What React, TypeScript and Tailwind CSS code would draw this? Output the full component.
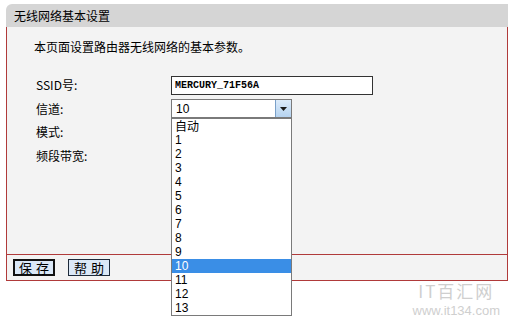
import React from "react";

const items = ["自动", "1", "2", "3", "4", "5", "6", "7", "8", "9", "10", "11", "12", "13"];

export default function App() {
  const cjk = { fontFamily: '"Noto Sans CJK SC", "Liberation Sans", sans-serif' };
  return (
    <div className="relative w-[514px] h-[320px] bg-white overflow-hidden text-[12px] text-black" style={cjk}>
      <div className="pt-[4px] pl-[6px] w-[508px]">
        <div className="h-[23px] bg-[#d5d5d5] rounded-tl-[6px] flex items-center pl-[8px] text-[12px] leading-none">
          无线网络基本设置
        </div>
        <div className="border-l border-r border-b border-[#b03a3a] bg-[#f3f3f3]">
          <div className="h-[228px] border-b border-[#b03a3a]">
            <div className="pt-[12px] pl-[27px] leading-[16px] text-[12px]">本页面设置路由器无线网络的基本参数。</div>
            <div className="pt-[18px] pl-[29px]">
              <div className="flex items-center h-[24px]">
                <div className="w-[135px]">SSID号:</div>
                <div className="w-[202px] h-[19px] border border-[#333] bg-white flex items-center pl-[3px] text-[10px] font-bold" style={{ fontFamily: '"Liberation Mono", monospace' }}>
                  MERCURY_71F56A
                </div>
              </div>
              <div className="flex items-center h-[23px]">
                <div className="w-[135px]">信道:</div>
                <div className="relative w-[121px] h-[19px] border border-[#7a7a7a] bg-white flex items-center">
                  <span className="pl-[4px] flex-1 text-[12px]" style={{ fontFamily: '"Liberation Sans", sans-serif' }}>10</span>
                  <span className="w-[16px] h-[17px] border-l border-[#7aa0c8] bg-gradient-to-b from-[#dcebfa] to-[#b5d3f0] flex items-center justify-center">
                    <svg width="7" height="4" viewBox="0 0 7 4"><path d="M0 0H7L3.5 4Z" fill="#1a1a1a" /></svg>
                  </span>
                  <div className="absolute left-[-1px] top-[18px] w-[121px] border border-[#7a7a7a] bg-white z-10">
                    {items.map((it) => (
                      <div
                        key={it}
                        className={`h-[14px] flex items-center pl-[3px] text-[12px] leading-[12px] ${it === "10" ? "bg-[#3a8ee6] text-white" : ""}`}
                        style={it === "自动" ? cjk : { fontFamily: '"Liberation Sans", sans-serif' }}
                      >
                        {it}
                      </div>
                    ))}
                  </div>
                </div>
              </div>
              <div className="flex items-center h-[24px]">
                <div className="w-[135px]">模式:</div>
              </div>
              <div className="flex items-center h-[24px]">
                <div className="w-[135px]">频段带宽:</div>
              </div>
            </div>
          </div>
          <div className="h-[25px] flex items-center pl-[6px] gap-[13px]">
            <button className="w-[42px] h-[17px] border-2 border-[#111] bg-[#dbe8f7] flex items-center justify-center text-[13px] leading-none tracking-[4px] pl-[4px]" style={cjk}>
              保存
            </button>
            <button className="w-[42px] h-[17px] border border-[#1d2a3a] bg-[#dbe8f7] flex items-center justify-center text-[13px] leading-none tracking-[4px] pl-[4px]" style={cjk}>
              帮助
            </button>
          </div>
        </div>
      </div>
      <div className="absolute right-[14px] bottom-[3px] flex flex-col items-center text-[#cfcfcf] gap-[5px]">
        <div className="text-[17px] leading-[17px] tracking-[2px]" style={cjk}>IT百汇网</div>
        <div className="text-[13px] leading-[13px]" style={{ fontFamily: '"Liberation Sans", sans-serif' }}>www.it134.com</div>
      </div>
    </div>
  );
}
